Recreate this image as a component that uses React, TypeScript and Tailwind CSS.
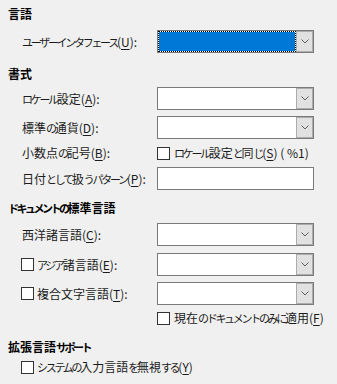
import React from "react";

// Meiryo UI draws kana narrow; squeeze kana runs so widths follow the original
function J({ s, bold }: { s: string; bold?: boolean }) {
  const parts = s.split(/([\u3040-\u30ff]+)/);
  return (
    <>
      {parts.map((p, i) =>
        i % 2 === 1 ? (
          <span
            key={i}
            className={bold ? "text-[11px] tracking-[-2.5px]" : "text-[11px] tracking-[-2.3px]"}
          >
            {p}
          </span>
        ) : (
          <span key={i}>{p}</span>
        )
      )}
    </>
  );
}

function Chevron() {
  return (
    <svg width="8" height="5" viewBox="0 0 8 5" className="text-[#606060]">
      <path d="M0.5 0.5 L4 4 L7.5 0.5" fill="none" stroke="currentColor" strokeWidth="1" />
    </svg>
  );
}

function Dropdown({ focused }: { focused?: boolean }) {
  return (
    <div className="flex h-[23px] w-[157px] shrink-0 border border-[#7a7a7a] bg-white">
      {focused ? (
        <div className="flex-1 border border-dotted border-black bg-[#0078d7] bg-clip-padding" />
      ) : (
        <div className="flex-1" />
      )}
      <div className="flex w-[17px] items-center justify-center border border-[#acacac] bg-[#e1e1e1]">
        <Chevron />
      </div>
    </div>
  );
}

function TextBox() {
  return <div className="h-[23px] w-[157px] shrink-0 border border-[#7a7a7a] bg-white" />;
}

function Box() {
  return <span className="h-[13px] w-[13px] shrink-0 border border-[#333333] bg-white" />;
}

function Label({ jp, k, tail = "" }: { jp: string; k: string; tail?: string }) {
  return (
    <span>
      <J s={jp} />
      (<u className="underline-offset-2">{k}</u>){tail}
    </span>
  );
}

function Heading({ children, className = "" }: { children: React.ReactNode; className?: string }) {
  return (
    <div className={`flex h-[20px] items-center pl-2 font-bold text-black ${className}`}>
      {children}
    </div>
  );
}

function Row({
  label,
  children,
  className = "",
  h = "h-[23px]",
}: {
  label?: React.ReactNode;
  children?: React.ReactNode;
  className?: string;
  h?: string;
}) {
  return (
    <div className={`flex ${h} items-center ${className}`}>
      <div className="flex w-[157px] shrink-0 items-center pl-[22px]">{label}</div>
      {children}
    </div>
  );
}

export default function App() {
  return (
    <div className="h-[384px] w-[337px] overflow-hidden whitespace-nowrap bg-[#f0f0f0] pt-1 font-['Noto_Sans_CJK_JP','Noto_Sans',sans-serif] text-[12px] leading-none text-[#1b1b1b]">
      <Heading>言語</Heading>
      <Row className="mt-[6px]" label={<Label jp="ユーザーインタフェース" k="U" tail=":" />}>
        <Dropdown focused />
      </Row>

      <Heading className="mt-[11px]">書式</Heading>
      <Row className="mt-[3px]" label={<Label jp="ロケール設定" k="A" tail=":" />}>
        <Dropdown />
      </Row>
      <Row className="mt-[6px]" label={<Label jp="標準の通貨" k="D" tail=":" />}>
        <Dropdown />
      </Row>
      <Row className="mt-[3px]" h="h-[22px]" label={<Label jp="小数点の記号" k="B" tail=":" />}>
        <div className="flex items-center gap-[4px]">
          <Box />
          <Label jp="ロケール設定と同じ" k="S" tail=" ( %1)" />
        </div>
      </Row>
      <Row className="mt-[3px]" label={<Label jp="日付として扱うパターン" k="P" tail=":" />}>
        <TextBox />
      </Row>

      <Heading className="mt-[8px]">
        <J s="ドキュメントの標準言語" bold />
      </Heading>
      <Row className="mt-[5px]" label={<Label jp="西洋諸言語" k="C" tail=":" />}>
        <Dropdown />
      </Row>
      <Row
        className="mt-[7px]"
        label={
          <div className="-ml-px flex items-center gap-[3px]">
            <Box />
            <Label jp="アジア諸言語" k="E" tail=":" />
          </div>
        }
      >
        <Dropdown />
      </Row>
      <Row
        className="mt-[6px]"
        label={
          <div className="-ml-px flex items-center gap-[3px]">
            <Box />
            <Label jp="複合文字言語" k="T" tail=":" />
          </div>
        }
      >
        <Dropdown />
      </Row>
      <Row className="mt-[2px]" h="h-[22px]">
        <div className="flex items-center gap-[4px]">
          <Box />
          <Label jp="現在のドキュメントのみに適用" k="F" />
        </div>
      </Row>

      <Heading className="mt-[8px]">
        <J s="拡張言語サポート" bold />
      </Heading>
      <div className="flex h-[20px] items-center gap-[3px] pl-[21px]">
        <Box />
        <Label jp="システムの入力言語を無視する" k="Y" />
      </div>
    </div>
  );
}
